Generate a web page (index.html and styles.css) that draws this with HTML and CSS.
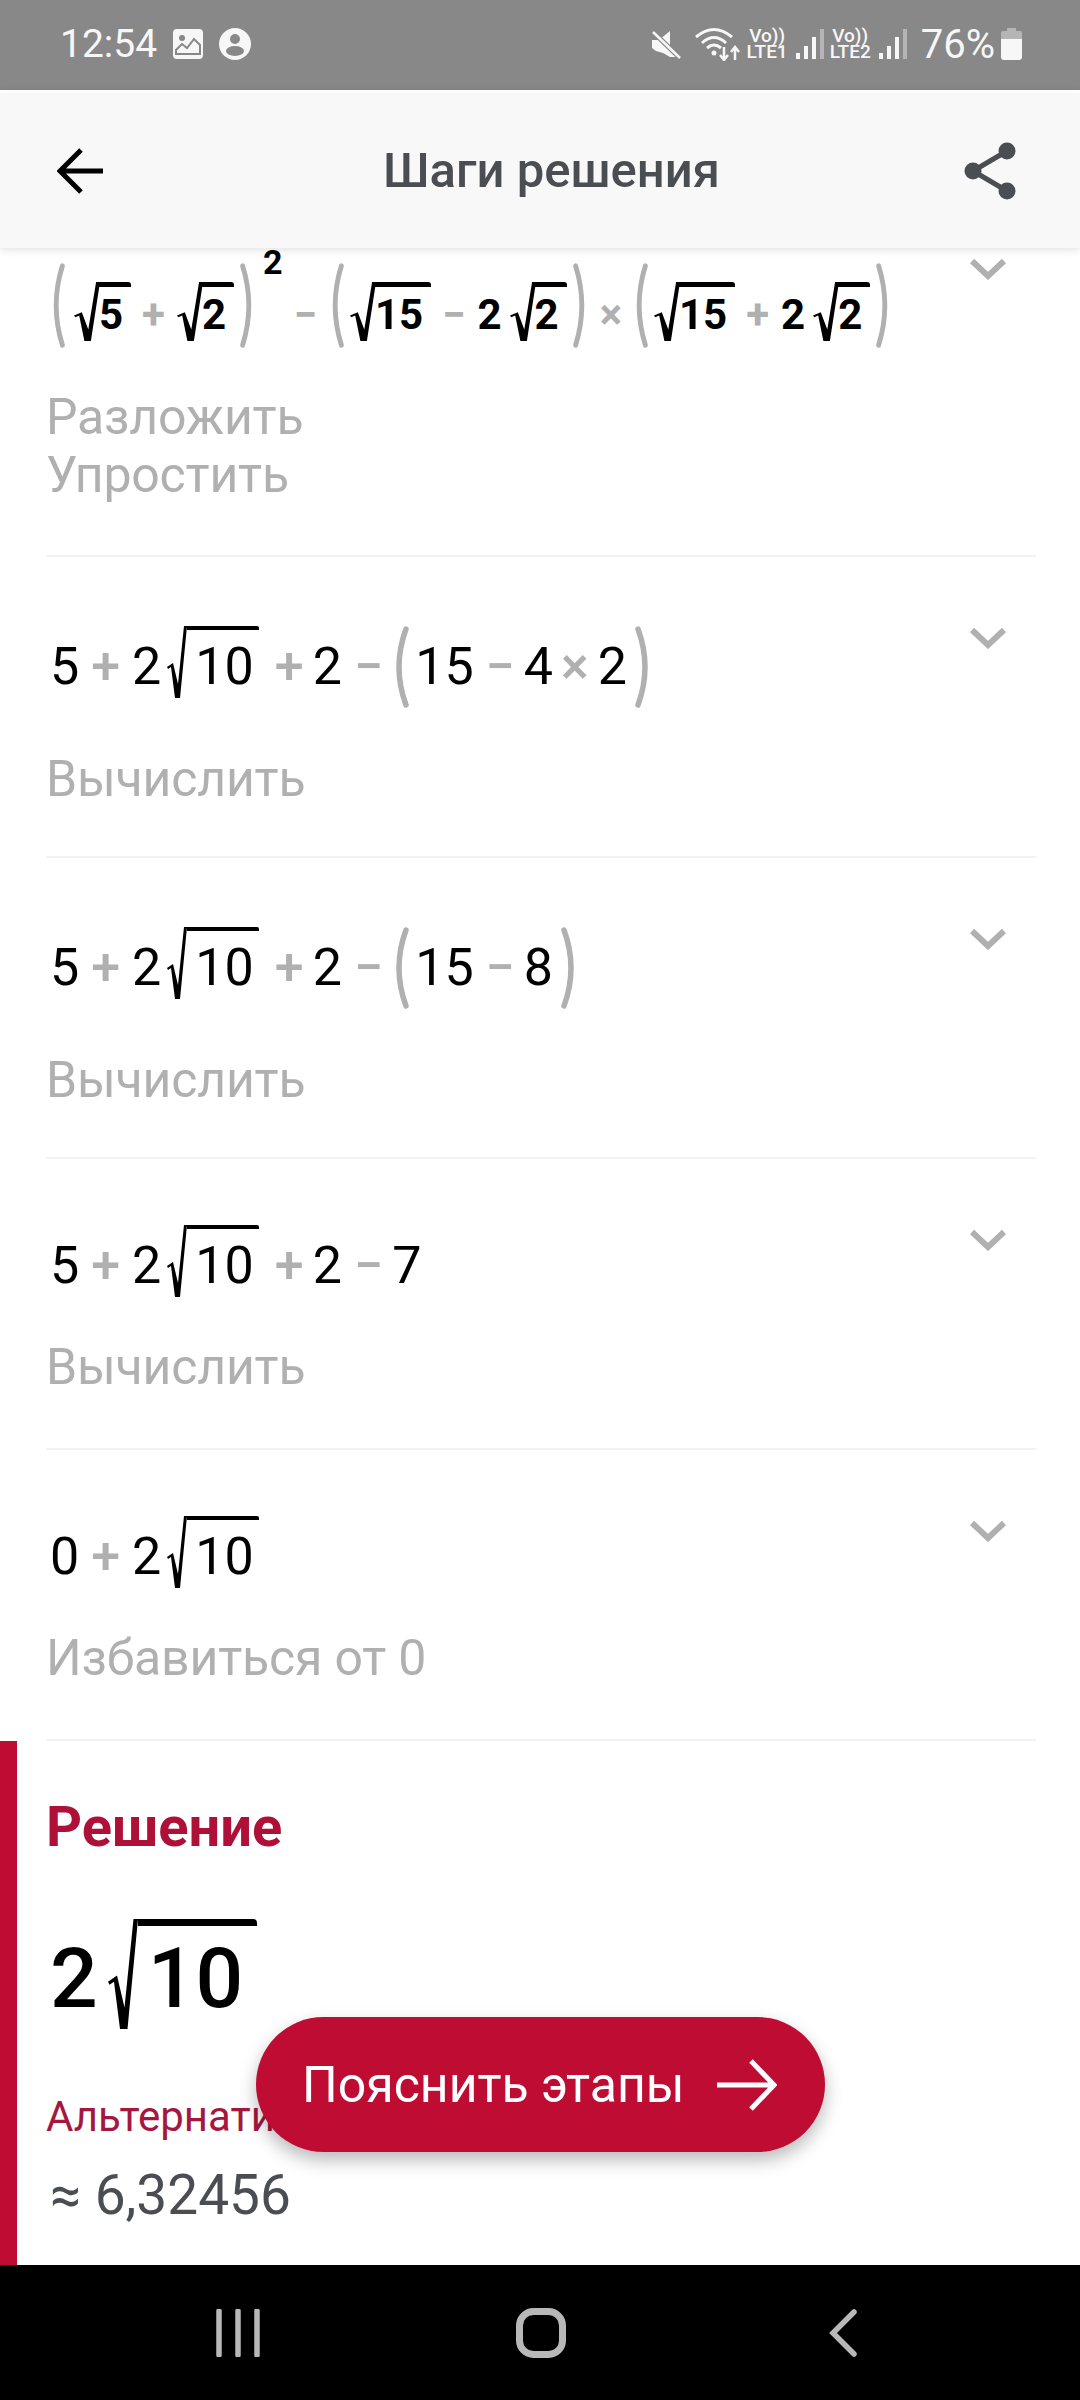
FILE: index.html

```html
<!DOCTYPE html>
<html lang="ru">
<head>
  <meta charset="UTF-8" />
  <meta name="viewport" content="width=device-width, initial-scale=1.0"/>
  <title>Шаги решения</title>
  <link rel="stylesheet" href="styles.css">
</head>
<body>
  <svg class="defs" width="0" height="0">
    <symbol id="sign" viewBox="0 0 20 72" preserveAspectRatio="none">
      <path d="M0 41 L6 37 L11 58 L17 0 L20 0 L13 72 L8 72 L4 41 L1 43 Z"/>
    </symbol>
    <symbol id="paren" viewBox="0 0 17 82" preserveAspectRatio="none">
      <path d="M14 3 Q0 41 14 79" fill="none" stroke="#b0b0b0" stroke-width="5.5" stroke-linecap="round"/>
    </symbol>
    <symbol id="chevron" viewBox="0 0 36 22">
      <path d="M2 3 L18 18 L34 3" fill="none" stroke="#b0b0b0" stroke-width="6"/>
    </symbol>
  </svg>

  <div class="status-bar">
    <div class="status-group">
      <span class="status-time">12:54</span>
      <svg class="status-icon" width="30" height="30" viewBox="0 0 30 30">
        <rect width="30" height="30" rx="4" fill="#f7f7f7"/>
        <circle cx="9" cy="9" r="3" fill="#888"/>
        <path d="M3 25 L3 21 L9 15 L14 19 L21 10 L27 16 L27 25 Z" fill="none" stroke="#888" stroke-width="2"/>
      </svg>
      <svg class="status-icon" width="32" height="32" viewBox="0 0 32 32">
        <circle cx="16" cy="16" r="16" fill="#f7f7f7"/>
        <circle cx="16" cy="11" r="5" fill="#888"/>
        <ellipse cx="16" cy="23" rx="9" ry="5" fill="#888"/>
      </svg>
    </div>
    <div class="status-group status-right">
      <svg width="30" height="30" viewBox="0 0 30 30">
        <path d="M1 11 L8 11 L19 2 L19 20 L25 28 L19 28 L12 24 L5 22 L1 19 Z" fill="#f7f7f7"/>
        <path d="M1 2 L30 30" stroke="#888" stroke-width="5"/>
        <path d="M2 3 L29 29" stroke="#f7f7f7" stroke-width="2.5"/>
      </svg>
      <svg class="status-wifi" width="46" height="34" viewBox="0 0 46 34">
        <path d="M1 10 Q19 -5 37 10 M7 16 Q19 5 31 16 M12 21 Q19 15 26 21" fill="none" stroke="#f7f7f7" stroke-width="3"/>
        <circle cx="19" cy="26" r="2.5" fill="#f7f7f7"/>
        <path d="M29 20 V33 M25 28 L29 33 L33 28 M40 33 V20 M36 25 L40 20 L44 25" fill="none" stroke="#f7f7f7" stroke-width="2.5"/>
      </svg>
      <div class="volte"><span>Vo))</span><span>LTE1</span></div>
      <svg class="signal" width="28" height="30" viewBox="0 0 28 30">
        <rect x="0" y="24" width="4" height="6" fill="#f7f7f7"/>
        <rect x="8" y="17" width="4" height="13" fill="#f7f7f7"/>
        <rect x="16" y="8" width="4" height="22" fill="#f7f7f7"/>
        <rect x="24" y="0" width="4" height="30" fill="#b5b5b5"/>
      </svg>
      <div class="volte"><span>Vo))</span><span>LTE2</span></div>
      <svg class="signal" width="28" height="30" viewBox="0 0 28 30">
        <rect x="0" y="24" width="4" height="6" fill="#f7f7f7"/>
        <rect x="8" y="17" width="4" height="13" fill="#f7f7f7"/>
        <rect x="16" y="8" width="4" height="22" fill="#f7f7f7"/>
        <rect x="24" y="0" width="4" height="30" fill="#b5b5b5"/>
      </svg>
      <span class="status-battery-text">76%</span>
      <svg width="21" height="32" viewBox="0 0 21 32">
        <path d="M6 0 H15 V3 H19 Q21 3 21 5 V11 H0 V5 Q0 3 2 3 H6 Z" fill="#b5b5b5"/>
        <path d="M0 11 H21 V29 Q21 32 18 32 H3 Q0 32 0 29 Z" fill="#f7f7f7"/>
      </svg>
    </div>
  </div>

  <header class="app-header">
    <svg width="46" height="46" viewBox="0 0 46 46">
      <path d="M46 23 H4 M24 2 L3 23 L24 44" fill="none" stroke="#000" stroke-width="5"/>
    </svg>
    <h1 class="app-title">Шаги решения</h1>
    <svg width="52" height="58" viewBox="0 0 52 58">
      <path d="M43 9 L9 29 L43 49" fill="none" stroke="#4a4d52" stroke-width="5"/>
      <circle cx="43" cy="9" r="8.5" fill="#4a4d52"/>
      <circle cx="9" cy="29" r="8.5" fill="#4a4d52"/>
      <circle cx="43" cy="49" r="8.5" fill="#4a4d52"/>
    </svg>
  </header>

  <main class="content">
    <section class="step step-first">
      <div class="step-main">
        <div class="math math-bold">
          <svg class="paren-b"><use href="#paren"/></svg>
          <span class="sqrt sqrt-b"><svg class="sign-b"><use href="#sign"/></svg><span class="radicand-b">5</span></span>
          <span class="op-b">+</span>
          <span class="sqrt sqrt-b"><svg class="sign-b"><use href="#sign"/></svg><span class="radicand-b">2</span></span>
          <svg class="paren-b flip"><use href="#paren"/></svg>
          <span class="power">2</span>
          <span class="op-b">−</span>
          <svg class="paren-b"><use href="#paren"/></svg>
          <span class="sqrt sqrt-b"><svg class="sign-b"><use href="#sign"/></svg><span class="radicand-b">15</span></span>
          <span class="op-b">−</span>
          <span>2</span>
          <span class="sqrt sqrt-b sqrt-co"><svg class="sign-b"><use href="#sign"/></svg><span class="radicand-b">2</span></span>
          <svg class="paren-b flip"><use href="#paren"/></svg>
          <span class="op-b op-times-b">×</span>
          <svg class="paren-b"><use href="#paren"/></svg>
          <span class="sqrt sqrt-b"><svg class="sign-b"><use href="#sign"/></svg><span class="radicand-b">15</span></span>
          <span class="op-b">+</span>
          <span>2</span>
          <span class="sqrt sqrt-b sqrt-co"><svg class="sign-b"><use href="#sign"/></svg><span class="radicand-b">2</span></span>
          <svg class="paren-b flip"><use href="#paren"/></svg>
        </div>
        <p class="step-label">Разложить<br />Упростить</p>
      </div>
      <svg class="chevron"><use href="#chevron"/></svg>
    </section>

    <section class="step step-tall">
      <div class="step-main">
        <div class="math math-tall">
          <span>5</span><span class="op">+</span><span>2</span>
          <span class="sqrt"><svg class="sign"><use href="#sign"/></svg><span class="radicand">10</span></span>
          <span class="op op-after">+</span><span>2</span><span class="op op-minus">−</span>
          <svg class="paren"><use href="#paren"/></svg>
          <span class="paren-in">15</span><span class="op op-minus">−</span><span>4</span><span class="op op-times">×</span><span>2</span>
          <svg class="paren paren-end flip"><use href="#paren"/></svg>
        </div>
        <p class="step-label">Вычислить</p>
      </div>
      <svg class="chevron"><use href="#chevron"/></svg>
    </section>

    <section class="step step-tall">
      <div class="step-main">
        <div class="math math-tall">
          <span>5</span><span class="op">+</span><span>2</span>
          <span class="sqrt"><svg class="sign"><use href="#sign"/></svg><span class="radicand">10</span></span>
          <span class="op op-after">+</span><span>2</span><span class="op op-minus">−</span>
          <svg class="paren"><use href="#paren"/></svg>
          <span class="paren-in">15</span><span class="op op-minus">−</span><span>8</span>
          <svg class="paren paren-end flip"><use href="#paren"/></svg>
        </div>
        <p class="step-label">Вычислить</p>
      </div>
      <svg class="chevron"><use href="#chevron"/></svg>
    </section>

    <section class="step">
      <div class="step-main">
        <div class="math">
          <span>5</span><span class="op">+</span><span>2</span>
          <span class="sqrt"><svg class="sign"><use href="#sign"/></svg><span class="radicand">10</span></span>
          <span class="op op-after">+</span><span>2</span><span class="op op-minus">−</span><span>7</span>
        </div>
        <p class="step-label">Вычислить</p>
      </div>
      <svg class="chevron"><use href="#chevron"/></svg>
    </section>

    <section class="step">
      <div class="step-main">
        <div class="math">
          <span>0</span><span class="op">+</span><span>2</span>
          <span class="sqrt"><svg class="sign"><use href="#sign"/></svg><span class="radicand">10</span></span>
        </div>
        <p class="step-label">Избавиться от 0</p>
      </div>
      <svg class="chevron"><use href="#chevron"/></svg>
    </section>

    <section class="solution">
      <h2 class="solution-title">Решение</h2>
      <div class="math math-big">
        <span>2</span>
        <span class="sqrt sqrt-big"><svg class="sign-big"><use href="#sign"/></svg><span class="radicand-big">10</span></span>
      </div>
      <p class="alt-label">Альтернативная форма</p>
      <p class="alt-value">≈ 6,32456</p>
    </section>

    <button class="explain-button">
      Пояснить этапы
      <svg width="60" height="52" viewBox="0 0 60 52">
        <path d="M0 26 H56 M34 2 L57 26 L34 50" fill="none" stroke="#fff" stroke-width="5"/>
      </svg>
    </button>
  </main>

  <nav class="nav-bar">
    <svg width="44" height="48" viewBox="0 0 44 48">
      <path d="M3 2 V46 M22 2 V46 M41 2 V46" fill="none" stroke="#b8b8b8" stroke-width="5.5" stroke-linecap="round"/>
    </svg>
    <svg class="nav-home" width="50" height="50" viewBox="0 0 50 50">
      <rect x="3.5" y="3.5" width="43" height="43" rx="14" fill="none" stroke="#b8b8b8" stroke-width="7"/>
    </svg>
    <svg width="28" height="48" viewBox="0 0 28 48">
      <path d="M25 3 L4 24 L25 45" fill="none" stroke="#b8b8b8" stroke-width="5.5" stroke-linecap="round"/>
    </svg>
  </nav>
</body>
</html>
```

FILE: styles.css

```css
* {
  box-sizing: border-box;
}
body {
  margin: 0;
  width: 1080px;
  height: 2400px;
  display: flex;
  flex-direction: column;
  overflow: hidden;
  background-color: white;
  font-family: Roboto, "Noto Sans", sans-serif;
}
.defs {
  position: absolute;
}
.status-bar {
  height: 90px;
  flex-shrink: 0;
  display: flex;
  justify-content: space-between;
  align-items: center;
  padding: 0 58px 2px 60px;
  background-color: #888888;
  color: #f7f7f7;
}
.status-group {
  display: flex;
  align-items: center;
}
.status-time {
  font-size: 39px;
  margin-right: 16px;
}
.status-icon {
  margin-right: 16px;
}
.status-right svg {
  flex-shrink: 0;
}
.status-wifi {
  margin-left: 14px;
}
.volte {
  display: flex;
  flex-direction: column;
  align-items: center;
  margin-left: 6px;
  font-size: 19px;
  font-weight: 500;
  line-height: 16px;
}
.signal {
  margin-left: 8px;
}
.status-battery-text {
  font-size: 40px;
  margin: 0 6px 0 14px;
}
.app-header {
  height: 158px;
  flex-shrink: 0;
  position: relative;
  z-index: 2;
  display: flex;
  align-items: center;
  padding: 0 64px 0 57px;
  background-color: #f8f8f8;
  border-top: 3px solid #fdfdfd;
  box-shadow: 0 2px 8px rgba(0, 0, 0, 0.12);
}
.app-title {
  flex: 1;
  margin: 0 0 0 36px;
  text-align: center;
  color: #4a4d52;
  font-size: 49px;
  font-weight: 500;
}
.content {
  flex: 1;
  position: relative;
  overflow: hidden;
}
.step {
  display: flex;
  justify-content: space-between;
  margin-left: 46px;
  margin-right: 44px;
  padding-bottom: 52px;
  padding-top: 60px;
  border-bottom: 2px solid #f2f2f2;
}
.step-tall {
  padding-bottom: 48px;
}
.step-first {
  margin-top: -31px;
  padding-bottom: 51px;
}
.step-first .chevron {
  margin-top: -19px;
}
.step-first .step-label {
  margin-top: 35px;
}
.step-main {
  flex: 1;
}
.chevron {
  width: 36px;
  height: 22px;
  margin: 10px 30px 0 0;
  flex-shrink: 0;
}
.step-label {
  margin: 25px 0 0;
  color: #b0b0b0;
  font-size: 50px;
  line-height: 58px;
  letter-spacing: -0.2px;
}
.math {
  display: flex;
  align-items: center;
  min-height: 94px;
  padding-left: 4px;
  color: #000;
  font-size: 52px;
  line-height: 60px;
}
.math-tall {
  min-height: 108px;
  padding-bottom: 8px;
}
.op {
  margin: 0 12px;
  color: #b0b0b0;
  font-weight: 500;
}
.op-after {
  margin: 0 9px 0 16px;
}
.op-minus {
  margin-right: 9px;
}
.op-times {
  margin-right: 9px;
  margin-left: 8px;
}
.sqrt {
  display: flex;
  align-items: flex-start;
  margin: 0 0 10px 6px;
}
.sign {
  width: 20px;
  height: 72px;
}
.radicand {
  border-top: 4px solid #000;
  border-top-right-radius: 2px;
  padding: 7px 5px 0 8px;
}
.paren {
  width: 17px;
  height: 82px;
}
.paren-in {
  margin-left: 6px;
}
.paren-end {
  margin-left: 8px;
}
.flip {
  transform: scaleX(-1);
}
.math-bold {
  min-height: 76px;
  font-size: 42px;
  font-weight: 700;
  line-height: 50px;
  padding-left: 7px;
  white-space: nowrap;
}
.paren-b {
  width: 15px;
  height: 85px;
  margin: -20px 6px 0 0;
}
.paren-b:first-child {
  margin-left: -3px;
  margin-right: 9px;
}
.paren-b.flip {
  margin: -20px 0 0 6px;
}
.sqrt-b {
  margin: 0 0 7px;
}
.sqrt-co {
  margin-left: 8px;
}
.sign-b {
  width: 26px;
  height: 59px;
}
.radicand-b {
  border-top: 5px solid #000;
  border-top-right-radius: 3px;
  padding: 3px 8px 0 0;
  margin-left: -1px;
}
.op-b {
  margin: 0 12px 0 11px;
  color: #b0b0b0;
}
.op-times-b {
  margin: 0 11px 0 12px;
}
.power {
  margin: -106px 0 0 8px;
  font-size: 34px;
  line-height: 26px;
}
.solution {
  height: 524px;
  padding: 56px 0 0 29px;
  border-left: 17px solid #be0c33;
}
.solution-title {
  margin: 0;
  color: #ae1037;
  font-size: 56px;
  font-weight: 700;
  line-height: 60px;
}
.math-big {
  margin-top: 62px;
  font-size: 84px;
  font-weight: 500;
  line-height: 90px;
}
.sqrt-big {
  margin: 0 0 10px 10px;
}
.sign-big {
  width: 30px;
  height: 110px;
}
.radicand-big {
  border-top: 7px solid #000;
  border-top-right-radius: 4px;
  padding: 8px 14px 0 10px;
}
.alt-label {
  margin: 53px 0 0;
  color: #a5173f;
  font-size: 42px;
  line-height: 50px;
  white-space: nowrap;
}
.alt-value {
  margin: 23px 0 0 4px;
  color: #4a4d52;
  font-size: 55px;
  line-height: 60px;
}
.explain-button {
  position: absolute;
  left: 256px;
  bottom: 113px;
  width: 569px;
  height: 135px;
  display: flex;
  justify-content: space-between;
  align-items: center;
  padding: 0 48px 0 46px;
  border: none;
  border-radius: 68px;
  background-color: #be0c33;
  color: white;
  font-family: Roboto, sans-serif;
  font-size: 50px;
  box-shadow: 0 8px 18px rgba(0, 0, 0, 0.28);
}
.nav-bar {
  height: 135px;
  flex-shrink: 0;
  display: flex;
  align-items: center;
  justify-content: space-between;
  padding: 0 223px 0 216px;
  background-color: #000;
}
.nav-home {
  margin-right: 8px;
}
```
